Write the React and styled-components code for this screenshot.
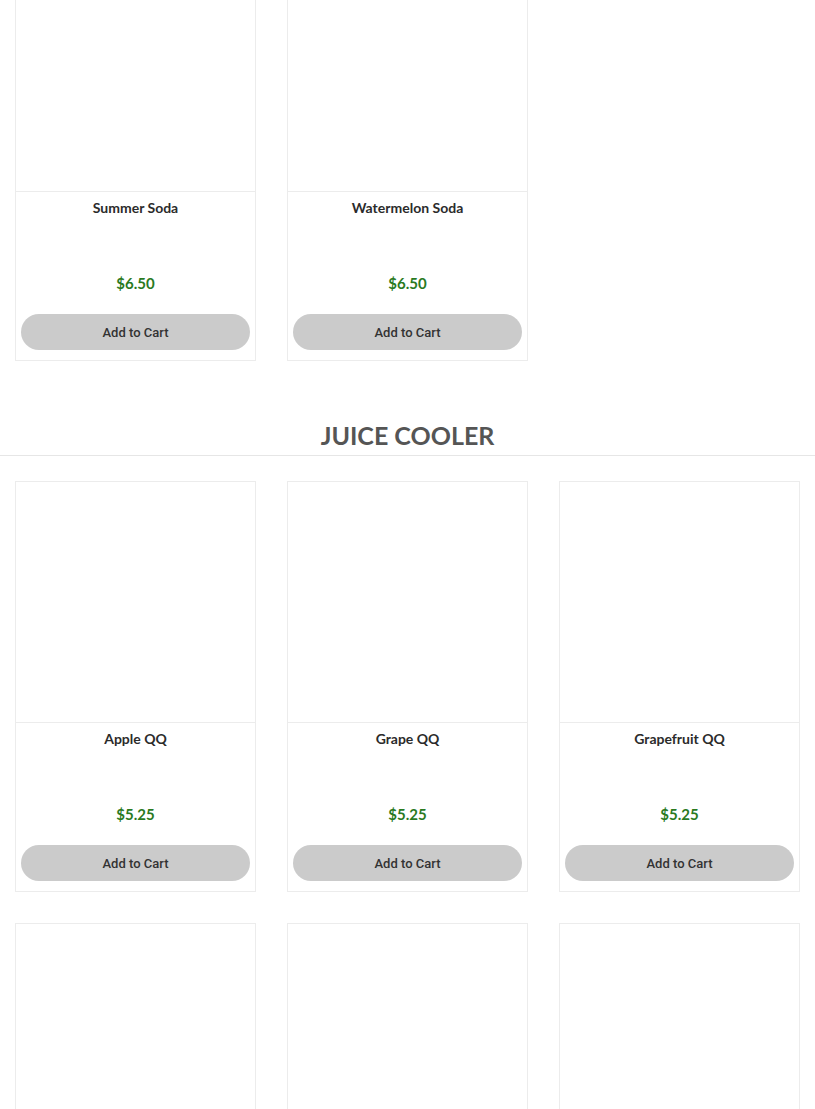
import React from 'react'
import styled, { createGlobalStyle } from 'styled-components'

const Global = createGlobalStyle`
  body {
    margin: 0;
    background: #fff;
    font-family: Lato, "Open Sans", Arial, sans-serif;
    overflow: hidden;
  }
`

// the page is shown scrolled: the first row of cards starts above the frame
const Page = styled.div`
  width: 815px;
  margin-top: -50px;
`

const Section = styled.section`
  margin-bottom: 58px;
`

const Heading = styled.h2`
  margin: 0 0 25px;
  padding-bottom: 4px;
  border-bottom: 1px solid #e6e6e6;
  text-align: center;
  font-size: 25px;
  line-height: 32px;
  font-weight: 700;
  color: #555;
`

const Grid = styled.div`
  display: grid;
  grid-template-columns: repeat(3, 1fr);
  column-gap: 31px;
  row-gap: 31px;
  padding: 0 15px;
`

const Card = styled.div`
  border: 1px solid #ececec;
  background: #fff;
  display: flex;
  flex-direction: column;
`

const Image = styled.div`
  height: 240px;
  background: #fff;
`

const Info = styled.div`
  border-top: 1px solid #ececec;
  padding: 6px 5px 10px;
  display: flex;
  flex-direction: column;
  align-items: center;
`

const Title = styled.div`
  font-size: 14px;
  line-height: 20px;
  font-weight: 700;
  color: #2b2b2b;
  height: 75px;
`

const Price = styled.div`
  font-size: 15px;
  line-height: 20px;
  font-weight: 700;
  color: #2a7a1f;
  margin-bottom: 21px;
`

const Button = styled.button`
  width: 100%;
  height: 36px;
  border: none;
  border-radius: 18px;
  background: #cbcbcb;
  color: #333;
  font-family: Roboto, Arial, sans-serif;
  font-size: 13px;
  font-weight: 500;
  cursor: pointer;
`

const sodas = [
  { name: 'Summer Soda', price: '$6.50' },
  { name: 'Watermelon Soda', price: '$6.50' },
]

const juices = [
  { name: 'Apple QQ', price: '$5.25' },
  { name: 'Grape QQ', price: '$5.25' },
  { name: 'Grapefruit QQ', price: '$5.25' },
  { name: '', price: '' },
  { name: '', price: '' },
  { name: '', price: '' },
]

const Product = ({ item }) => (
  <Card>
    <Image />
    <Info>
      <Title>{item.name}</Title>
      <Price>{item.price}</Price>
      <Button>Add to Cart</Button>
    </Info>
  </Card>
)

const App = () => {
  return (
    <Page>
      <Global />
      <Section>
        <Grid>
          {sodas.map((p, i) => <Product key={i} item={p} />)}
        </Grid>
      </Section>
      <Section>
        <Heading>JUICE COOLER</Heading>
        <Grid>
          {juices.map((p, i) => <Product key={i} item={p} />)}
        </Grid>
      </Section>
    </Page>
  )
}

export default App
